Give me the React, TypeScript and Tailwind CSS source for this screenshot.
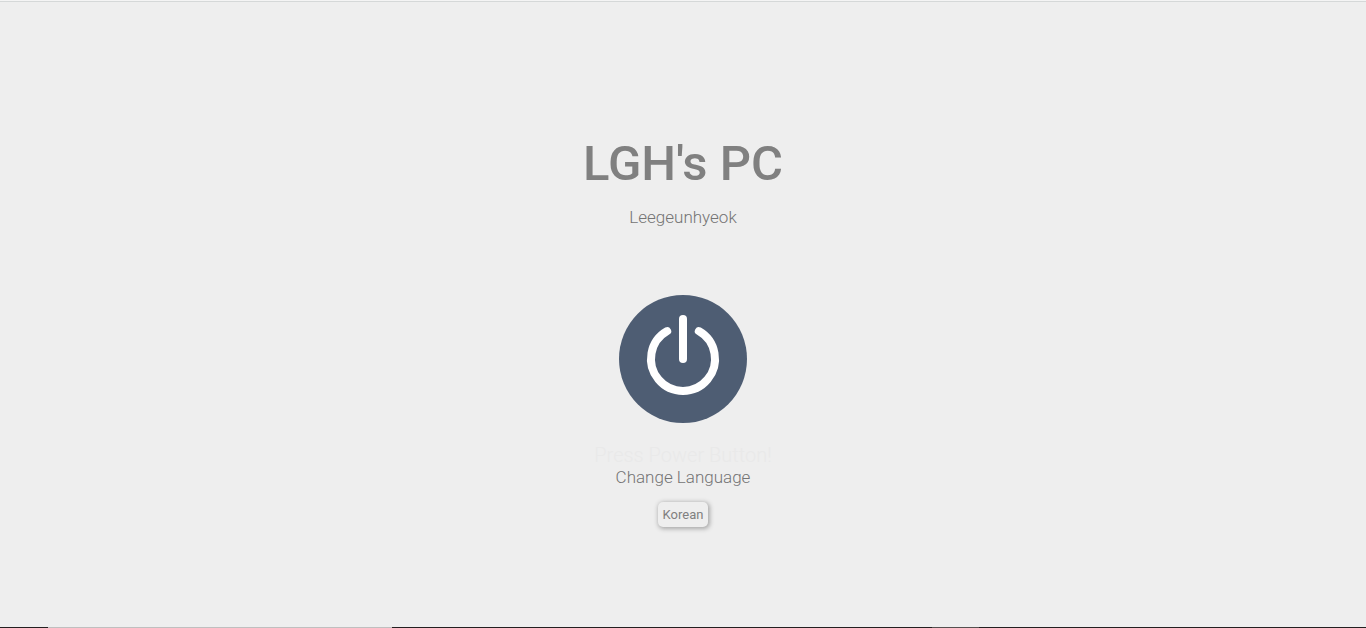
export default function App() {
  return (
    <div className="flex min-h-screen flex-col bg-[#eeeeee] font-['Roboto','Liberation_Sans',sans-serif] text-[#808080]">
      <div className="h-[2px] border-b border-[#d5d8d8] bg-[#f4f4f4]" />
      <main className="flex grow flex-col items-center pt-[132px]">
        <h1 className="text-[49px] leading-[60px] font-medium">LGH's PC</h1>
        <p className="mt-[11px] text-[17px] leading-6 font-light text-[#747474]">Leegeunhyeok</p>
        <button type="button" aria-label="Power" className="mt-[66px] size-32 rounded-full bg-[#4e5d73]">
          <svg viewBox="0 0 128 128" className="size-32" fill="none" stroke="#fff" strokeWidth="8" strokeLinecap="round" aria-hidden="true">
            <path d="M48.2 36.1A32 32 0 1 0 79.8 36.1" />
            <path d="M64 24V64" />
          </svg>
        </button>
        <p className="mt-5 text-[20px] leading-6 font-light text-[#e9e9e9]">Press Power Button!</p>
        <p className="text-[17px] leading-5 font-light text-[#747474]">Change Language</p>
        <button type="button" className="mt-[15px] h-[25px] rounded-[5px] px-[5px] text-[13px] leading-5 shadow-[1px_1px_4px_1px_#aaaaaa]">
          Korean
        </button>
      </main>
      <footer className="flex h-px bg-[#231f20]">
        <div className="w-[3.5%]" />
        <div className="w-[25.2%] bg-[#bfbfbf]" />
        <div className="w-[39.5%]" />
        <div className="w-[3.5%] bg-[#55504f]" />
      </footer>
    </div>
  );
}
